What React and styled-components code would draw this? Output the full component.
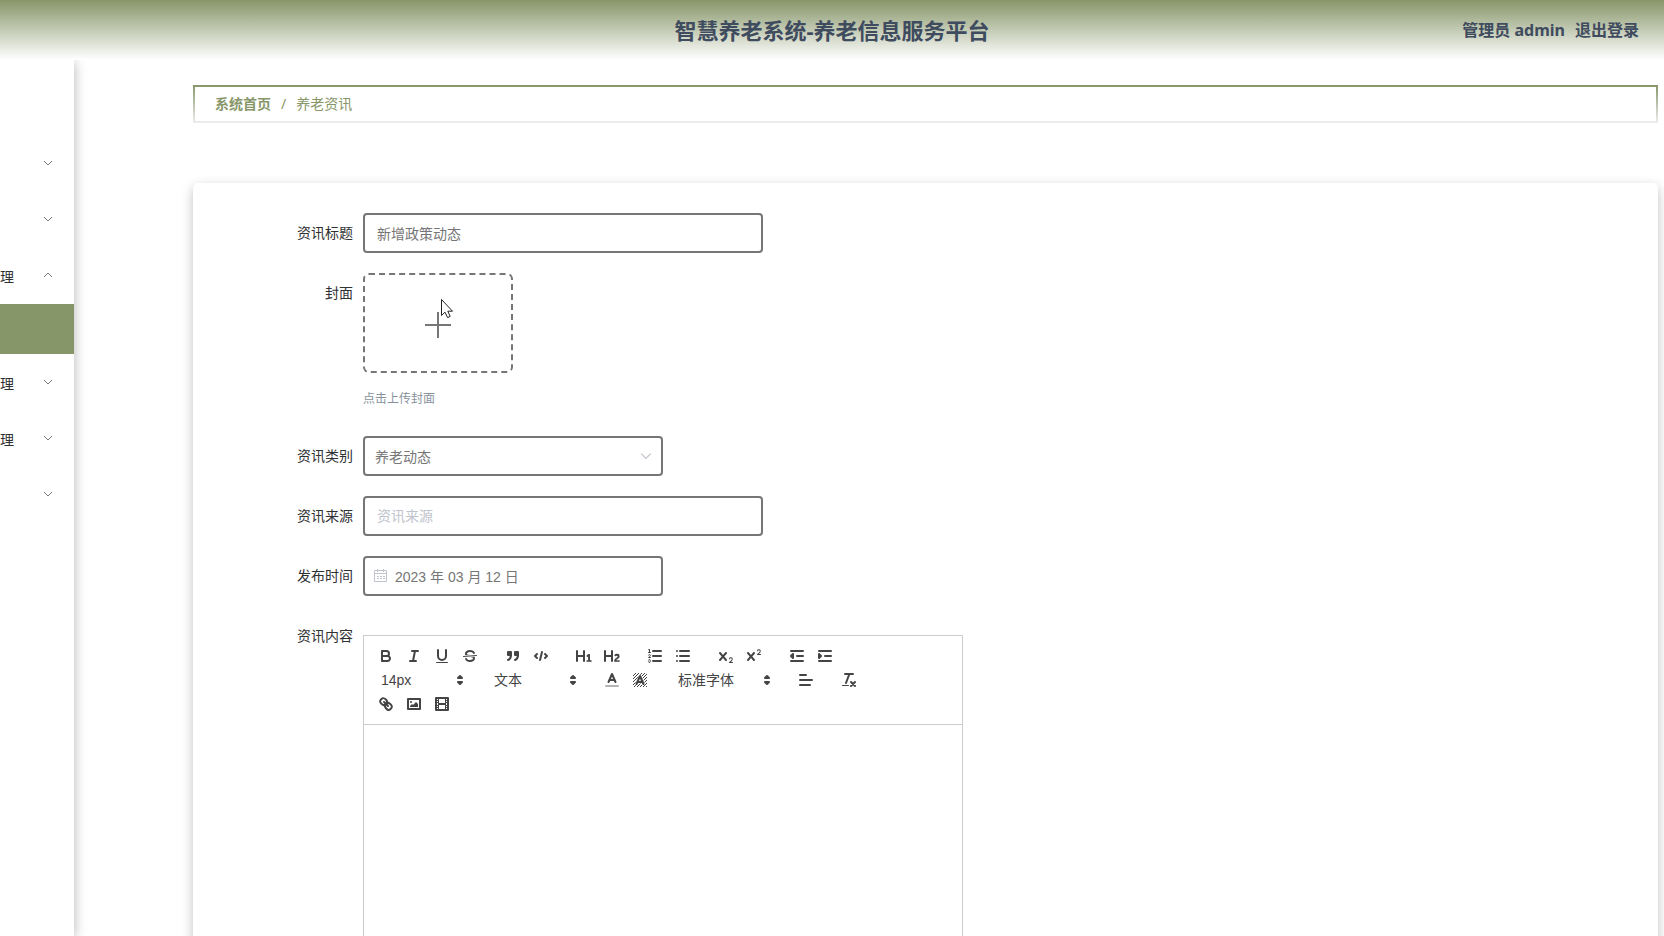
import React from "react";
import styled, { createGlobalStyle, css } from "styled-components";

const GREEN = "#879669";
const GREY = "#767676";

const GlobalStyle = createGlobalStyle`
  * { box-sizing: border-box; }
  body {
    margin: 0;
    background: #fff;
    color: #303133;
    font-family: "Noto Sans", "Noto Sans CJK SC", sans-serif;
    font-size: 14px;
  }
  button, input, select { font: inherit; color: inherit; margin: 0; }
`;

const Shell = styled.div`
  display: flex;
  flex-direction: column;
  height: 100vh;
  overflow: hidden;
`;

const Header = styled.header`
  display: grid;
  grid-template-columns: 1fr auto 1fr;
  align-items: center;
  flex: none;
  z-index: 1;
  height: 60px;
  padding: 0 25px;
  background: linear-gradient(${GREEN}, #fff);
  color: #3f4b5e;
  font-weight: 700;
`;

const Title = styled.h1`
  grid-column: 2;
  margin: 0;
  font-size: 22px;
  line-height: 30px;
`;

const Account = styled.div`
  display: flex;
  justify-content: flex-end;
  gap: 10px;
  font-size: 16px;
  line-height: 24px;
`;

const Logout = styled.a`
  color: inherit;
  text-decoration: none;
`;

const Body = styled.div`
  display: flex;
  flex: 1;
  min-height: 0;
`;

const Sidebar = styled.nav`
  flex: none;
  width: 74px;
  padding-top: 75px;
  background: #fff;
  box-shadow: 0 2px 12px rgba(0, 0, 0, 0.3);
`;

const MenuItem = styled.button`
  display: flex;
  align-items: center;
  justify-content: space-between;
  width: 100%;
  height: 56px;
  padding: 0 21px 0 0;
  border: 0;
  background: none;
  line-height: 20px;
  text-align: left;
`;

const MenuText = styled.span`
  padding-top: 3px;
`;

const ActiveItem = styled.a`
  display: block;
  height: 50px;
  margin-top: 1px;
  background: ${GREEN};
`;

const Main = styled.main`
  flex: 1;
  min-width: 0;
  padding: 25px 6px 0 119px;
`;

const Breadcrumb = styled.nav`
  display: flex;
  align-items: center;
  gap: 10px;
  height: 38px;
  padding: 0 20px;
  border: 2px solid;
  border-image: linear-gradient(${GREEN}, #eee) 2;
  color: ${GREEN};
  line-height: 20px;
`;

const Crumb = styled.a`
  color: inherit;
  font-weight: ${(p) => (p.$strong ? 700 : 400)};
  text-decoration: none;
`;

const Card = styled.form`
  display: flex;
  flex-direction: column;
  gap: 20px;
  margin-top: 60px;
  padding: 30px 20px;
  border-radius: 5px;
  background: #fff;
  box-shadow: 0 4px 12px rgba(0, 0, 0, 0.25);
`;

const Row = styled.div`
  display: grid;
  grid-template-columns: 140px minmax(0, 1fr);
  column-gap: 10px;
  align-items: start;
`;

const Label = styled.label`
  line-height: 40px;
  text-align: right;
`;

const control = css`
  height: 40px;
  border: 2px solid ${GREY};
  border-radius: 4px;
  background: #fff;
  color: ${GREY};
  font-family: "Liberation Sans", "Noto Sans CJK SC", sans-serif;
  outline: none;
`;

const TextInput = styled.input`
  ${control}
  width: 400px;
  max-width: 100%;
  padding: 0 12px;
  &::placeholder { color: #c0c4cc; }
`;

const Field = styled.div`
  position: relative;
  width: 300px;
  max-width: 100%;
`;

const Select = styled.select`
  ${control}
  appearance: none;
  width: 100%;
  padding: 2px 30px 0 10px;
`;

const DateInput = styled.input`
  ${control}
  display: block;
  width: 100%;
  padding: 0 12px 0 30px;
`;

const FieldIcon = styled.span`
  position: absolute;
  top: 0;
  bottom: 0;
  ${(p) => (p.$end ? "right: 11px;" : "left: 11px;")}
  display: flex;
  align-items: center;
  color: #c0c4cc;
  pointer-events: none;
`;

const Upload = styled.button`
  position: relative;
  display: flex;
  align-items: center;
  justify-content: center;
  width: 150px;
  height: 100px;
  padding: 4px 0 0;
  border: 2px dashed ${GREY};
  border-radius: 6px;
  background: #fff;
  color: ${GREY};
`;

const Pointer = styled.svg`
  position: absolute;
  left: 75px;
  top: 23px;
`;

const Hint = styled.p`
  margin: 9px 0 0;
  color: #87929c;
  font-size: 12px;
  line-height: 34px;
`;

const Editor = styled.div`
  width: 600px;
  max-width: 100%;
  margin-top: 19px;
  color: #444;
  font-family: "Liberation Sans", "Noto Sans CJK SC", sans-serif;
`;

const Toolbar = styled.div`
  display: flex;
  flex-wrap: wrap;
  padding: 8px;
  border: 1px solid #ccc;
`;

const Group = styled.div`
  display: flex;
  margin-right: 15px;
`;

const Tool = styled.button`
  width: 28px;
  height: 24px;
  padding: 3px 5px;
  border: 0;
  background: none;
  svg { display: block; width: 18px; height: 18px; }
`;

const Picker = styled.div`
  position: relative;
  width: ${(p) => p.$width}px;
  height: 24px;
  svg {
    position: absolute;
    top: 3px;
    right: 1px;
    width: 18px;
    height: 18px;
    pointer-events: none;
  }
`;

const PickerSelect = styled.select`
  appearance: none;
  width: 100%;
  height: 24px;
  padding: 0 18px 0 9px;
  border: 0;
  background: none;
  outline: none;
`;

const EditArea = styled.div`
  min-height: 400px;
  padding: 12px 15px;
  border: 1px solid #ccc;
  border-top: 0;
  outline: none;
`;

const Glyph = styled.svg.attrs({ viewBox: "0 0 18 18", "aria-hidden": true })`
  fill: none;
  stroke: #444;
  stroke-width: 2;
  stroke-linecap: round;
  stroke-linejoin: round;
  .thin { stroke-width: 1; }
  .fill { fill: #444; stroke: none; }
  .both { fill: #444; }
  .halo { stroke: #fff; stroke-width: 3; }
`;

const cross =
  "M9.65,5.241a1,1,0,0,0-1.409.108L6,7.964,3.759,5.349A1,1,0,0,0,2.192,6.59178Q2.21541,6.6213,2.241,6.649L4.684,9.5,2.241,12.35A1,1,0,0,0,3.71,13.70722q0.02557-.02768.049-0.05722L6,11.036,8.241,13.65a1,1,0,1,0,1.567-1.24277Q9.78459,12.3777,9.759,12.35L7.316,9.5,9.759,6.651A1,1,0,0,0,9.65,5.241Z";

const hatch = [];
for (let y = 2; y < 16; y += 1) {
  for (let x = 2; x < 16; x += 1) {
    if ((x + y) % 3 === 0) hatch.push(`M${x},${y}h1v1h-1z`);
  }
}

const icons = {
  bold: (
    <>
      <path d="M5,4H9.5A2.5,2.5,0,0,1,12,6.5v0A2.5,2.5,0,0,1,9.5,9H5V4Z" />
      <path d="M5,9h5.5A2.5,2.5,0,0,1,13,11.5v0A2.5,2.5,0,0,1,10.5,14H5V9Z" />
    </>
  ),
  italic: <path d="M7,4H13M5,14H11M8,14L10,4" />,
  underline: (
    <>
      <path d="M5,3V9a4.012,4.012,0,0,0,4,4H9a4.012,4.012,0,0,0,4-4V3" />
      <rect className="fill" height="1" rx="0.5" width="12" x="3" y="15" />
    </>
  ),
  strike: (
    <>
      <path className="thin" d="M15.5,8.5L2.5,9.5" />
      <path className="fill" d="M9.007,8C6.542,7.791,6,7.519,6,6.5,6,5.792,7.283,5,9,5c1.571,0,2.765.679,2.969,1.309a1,1,0,0,0,1.9-.617C13.356,4.106,11.354,3,9,3,6.2,3,4,4.538,4,6.5a3.2,3.2,0,0,0,.5,1.843Z" />
      <path className="fill" d="M8.984,10C11.457,10.208,12,10.479,12,11.5c0,0.708-1.283,1.5-3,1.5-1.571,0-2.765-.679-2.969-1.309a1,1,0,1,0-1.9.617C4.644,13.894,6.646,15,9,15c2.8,0,5-1.538,5-3.5a3.2,3.2,0,0,0-.5-1.843Z" />
    </>
  ),
  quote: (
    <>
      <rect className="both" height="3" width="3" x="4" y="5" />
      <rect className="both" height="3" width="3" x="11" y="5" />
      <path className="both" d="M7,8c0,4.031-3,5-3,5M14,8c0,4.031-3,5-3,5" />
    </>
  ),
  code: <path d="M5,7L3,9L5,11M13,7L15,9L13,11M10,5L8,13" />,
  h1: (
    <path className="fill" d="M10,4V14a1,1,0,0,1-2,0V10H3v4a1,1,0,0,1-2,0V4A1,1,0,0,1,3,4V8H8V4a1,1,0,0,1,2,0Zm6.06787,9.209H14.98975V7.59863a.54085.54085,0,0,0-.605-.60547h-.62744a1.01119,1.01119,0,0,0-.748.29688L11.645,8.56641a.5435.5435,0,0,0-.022.8584l.28613.30762a.53861.53861,0,0,0,.84717.0332l.09912-.08789a1.2137,1.2137,0,0,0,.2417-.35254h.02246s-.01123.30859-.01123.60547V13.209H12.041a.54085.54085,0,0,0-.605.60547v.43945a.54085.54085,0,0,0,.605.60547h4.02686a.54085.54085,0,0,0,.605-.60547v-.43945A.54085.54085,0,0,0,16.06787,13.209Z" />
  ),
  h2: (
    <path className="fill" d="M16.73975,13.81445v.43945a.54085.54085,0,0,1-.605.60547H11.855a.58392.58392,0,0,1-.64893-.60547V14.0127c0-2.90527,3.39941-3.42187,3.39941-4.55469a.77675.77675,0,0,0-.84717-.78125,1.17684,1.17684,0,0,0-.83594.38477c-.2749.26367-.561.374-.85791.13184l-.4292-.34082c-.30811-.24219-.38525-.51758-.1543-.81445a2.97155,2.97155,0,0,1,2.45361-1.17676,2.45393,2.45393,0,0,1,2.68408,2.40918c0,2.45312-3.1792,2.92676-3.27832,3.93848h2.79443A.54085.54085,0,0,1,16.73975,13.81445ZM9,3A.99974.99974,0,0,0,8,4V8H3V4A1,1,0,0,0,1,4V14a1,1,0,0,0,2,0V10H8v4a1,1,0,0,0,2,0V4A.99974.99974,0,0,0,9,3Z" />
  ),
  ordered: (
    <>
      <path d="M7,4H15M7,9H15M7,14H15" />
      <path className="thin" d="M2.5,5.5H4.5" />
      <path className="fill" d="M3.5,6A0.5,0.5,0,0,1,3,5.5V3.085l-0.276.138A0.5,0.5,0,0,1,2.053,3c-0.124-.247-0.023-0.324.224-0.447l1-.5A0.5,0.5,0,0,1,4,2.5v3A0.5,0.5,0,0,1,3.5,6Z" />
      <path className="thin" d="M4.5,10.5h-2c0-.234,1.85-1.076,1.85-2.234A0.959,0.959,0,0,0,2.5,8.156" />
      <path className="thin" d="M2.5,14.846a0.959,0.959,0,0,0,1.85-.109A0.7,0.7,0,0,0,3.75,14a0.688,0.688,0,0,0,.6-0.736,0.959,0.959,0,0,0-1.85-.109" />
    </>
  ),
  bullet: <path d="M6,4H15M6,9H15M6,14H15M3,4H3M3,9H3M3,14H3" />,
  sub: (
    <>
      <path className="fill" d="M15.5,15H13.861a3.858,3.858,0,0,0,1.914-2.975,1.8,1.8,0,0,0-1.6-1.751A1.921,1.921,0,0,0,12.021,11.7a0.50013,0.50013,0,1,0,.957.291h0a0.914,0.914,0,0,1,1.053-.725,0.81,0.81,0,0,1,.744.762c0,1.076-1.16971,1.86982-1.93971,2.43082A1.45639,1.45639,0,0,0,12,15.5a0.5,0.5,0,0,0,.5.5h3A0.5,0.5,0,0,0,15.5,15Z" />
      <path className="fill" d={cross} />
    </>
  ),
  sup: (
    <>
      <path className="fill" d="M15.5,7H13.861a4.015,4.015,0,0,0,1.914-2.975,1.8,1.8,0,0,0-1.6-1.751A1.922,1.922,0,0,0,12.021,3.7a0.5,0.5,0,1,0,.957.291,0.917,0.917,0,0,1,1.053-.725,0.81,0.81,0,0,1,.744.762c0,1.077-1.164,1.925-1.934,2.486A1.423,1.423,0,0,0,12,7.5a0.5,0.5,0,0,0,.5.5h3A0.5,0.5,0,0,0,15.5,7Z" />
      <path className="fill" d={cross} />
    </>
  ),
  outdent: (
    <>
      <path d="M3,14H15M3,4H15M9,9H15" />
      <path className="both" d="M5,7V11L3,9Z" />
    </>
  ),
  indent: (
    <>
      <path d="M3,14H15M3,4H15M9,9H15" />
      <path className="both" d="M3,7V11L5,9Z" />
    </>
  ),
  color: (
    <>
      <path opacity="0.4" d="M3,15H15" />
      <path d="M5.5,11L9,3L12.5,11M11.63,9H6.38" />
    </>
  ),
  background: (
    <>
      <path className="fill" d={hatch.join("")} />
      <path className="halo" d="M5.5,13L9,5L12.5,13M11.63,11H6.38" />
      <path d="M5.5,13L9,5L12.5,13M11.63,11H6.38" />
    </>
  ),
  align: <path d="M3,9H15M3,14H13M3,4H9" />,
  clean: (
    <>
      <path d="M5,3H13M6,12L9.35,3M11,11L15,15M15,11L11,15" />
      <rect className="fill" height="1" rx="0.5" width="7" x="2" y="14" />
    </>
  ),
  link: (
    <>
      <path d="M7,7L11,11" />
      <path d="M8.9,4.577a3.476,3.476,0,0,1,.36,4.679A3.476,3.476,0,0,1,4.577,8.9C3.185,7.5,2.035,6.4,4.217,4.217S7.5,3.185,8.9,4.577Z" />
      <path d="M13.423,9.1a3.476,3.476,0,0,0-4.679-.36,3.476,3.476,0,0,0,.36,4.679c1.392,1.392,2.5,2.542,4.679.36S14.815,10.5,13.423,9.1Z" />
    </>
  ),
  image: (
    <>
      <rect height="10" width="12" x="3" y="4" />
      <circle className="fill" cx="6" cy="7" r="1" />
      <path className="fill" d="M5,12V11L7,9L8,10L11,7L13,9V12Z" />
    </>
  ),
  video: (
    <>
      <rect height="12" width="12" x="3" y="3" />
      <path className="fill" d="M5,3h1v12h-1zM12,3h1v12h-1zM5,8h8v2h-8z" />
      <path className="fill" d="M3,5h3v1h-3zM3,7h3v1h-3zM3,10h3v1h-3zM3,12h3v1h-3zM12,5h3v1h-3zM12,7h3v1h-3zM12,10h3v1h-3zM12,12h3v1h-3z" />
    </>
  ),
  arrows: (
    <>
      <path className="both" d="M7,11L9,13L11,11Z" />
      <path className="both" d="M7,7L9,5L11,7Z" />
    </>
  ),
};

const toolbar = [
  [["bold", "加粗"], ["italic", "斜体"], ["underline", "下划线"], ["strike", "删除线"]],
  [["quote", "引用"], ["code", "代码块"]],
  [["h1", "标题一"], ["h2", "标题二"]],
  [["ordered", "有序列表"], ["bullet", "无序列表"]],
  [["sub", "下标"], ["sup", "上标"]],
  [["outdent", "减少缩进"], ["indent", "增加缩进"]],
  { label: "字号", value: "14px", width: 98 },
  { label: "段落", value: "文本", width: 98 },
  [["color", "文字颜色"], ["background", "背景颜色"]],
  { label: "字体", value: "标准字体", width: 108 },
  [["align", "对齐"]],
  [["clean", "清除格式"]],
  [["link", "链接"], ["image", "图片"], ["video", "视频"]],
];

function Chevron({ up, size = 10 }) {
  return (
    <svg width={size} height={size} viewBox="0 0 10 10" fill="none" stroke="currentColor" aria-hidden="true">
      <path d={up ? "M1,7L5,3L9,7" : "M1,3L5,7L9,3"} />
    </svg>
  );
}

const MenuArrow = styled.span`
  display: flex;
  color: #76797f;
`;

function Menu({ text = "", up }) {
  return (
    <MenuItem type="button" aria-label={text || "菜单"}>
      <MenuText>{text}</MenuText>
      <MenuArrow><Chevron up={up} /></MenuArrow>
    </MenuItem>
  );
}

export default function App() {
  return (
    <Shell>
      <GlobalStyle />
      <Header>
        <Title>智慧养老系统-养老信息服务平台</Title>
        <Account>
          <span>管理员 admin</span>
          <Logout href="#logout">退出登录</Logout>
        </Account>
      </Header>
      <Body>
        <Sidebar>
          <Menu />
          <Menu />
          <Menu text="理" up />
          <ActiveItem href="#news" aria-label="养老资讯" />
          <Menu text="理" />
          <Menu text="理" />
          <Menu />
        </Sidebar>
        <Main>
          <Breadcrumb>
            <Crumb href="#home" $strong>系统首页</Crumb>
            <span>/</span>
            <Crumb href="#news">养老资讯</Crumb>
          </Breadcrumb>
          <Card>
            <Row>
              <Label htmlFor="title">资讯标题</Label>
              <TextInput id="title" defaultValue="新增政策动态" />
            </Row>
            <Row>
              <Label htmlFor="cover">封面</Label>
              <div>
                <Upload id="cover" type="button">
                  <svg width="26" height="26" viewBox="0 0 26 26" stroke="currentColor" strokeWidth="2" aria-hidden="true">
                    <path d="M0,13H26M13,0V26" />
                  </svg>
                  <Pointer width="14" height="21" viewBox="0 0 14 21" aria-hidden="true">
                    <path d="M1.5,1.5V17.5L5,14.2L7.6,19.6L10.2,18.4L7.8,13.2H12.5Z" fill="#fff" stroke="#222" />
                  </Pointer>
                </Upload>
                <Hint>点击上传封面</Hint>
              </div>
            </Row>
            <Row>
              <Label htmlFor="category">资讯类别</Label>
              <Field>
                <Select id="category"><option>养老动态</option></Select>
                <FieldIcon $end><Chevron size={12} /></FieldIcon>
              </Field>
            </Row>
            <Row>
              <Label htmlFor="source">资讯来源</Label>
              <TextInput id="source" placeholder="资讯来源" />
            </Row>
            <Row>
              <Label htmlFor="date">发布时间</Label>
              <Field>
                <DateInput id="date" defaultValue="2023 年 03 月 12 日" />
                <FieldIcon>
                  <svg width="14" height="14" viewBox="0 0 14 14" fill="none" stroke="currentColor" aria-hidden="true">
                    <path d="M0.5,1.5H12.5V12.5H0.5ZM0.5,4.5H12.5M3.5,0V3M9.5,0V3" />
                    <path d="M3,7.5H5M6,7.5H8M9,7.5H11M3,9.5H5M6,9.5H8M9,9.5H11" />
                  </svg>
                </FieldIcon>
              </Field>
            </Row>
            <Row>
              <Label id="content-label" htmlFor="content">资讯内容</Label>
              <Editor>
                <Toolbar role="toolbar">
                  {toolbar.map((group, i) => (
                    <Group key={i}>
                      {Array.isArray(group) ? (
                        group.map(([name, label]) => (
                          <Tool key={name} type="button" aria-label={label}>
                            <Glyph>{icons[name]}</Glyph>
                          </Tool>
                        ))
                      ) : (
                        <Picker $width={group.width}>
                          <PickerSelect aria-label={group.label}>
                            <option>{group.value}</option>
                          </PickerSelect>
                          <Glyph>{icons.arrows}</Glyph>
                        </Picker>
                      )}
                    </Group>
                  ))}
                </Toolbar>
                <EditArea id="content" role="textbox" aria-labelledby="content-label" contentEditable suppressContentEditableWarning />
              </Editor>
            </Row>
          </Card>
        </Main>
      </Body>
    </Shell>
  );
}
